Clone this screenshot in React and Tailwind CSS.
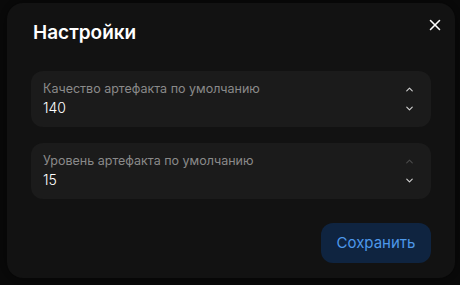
import React, { useState } from 'react';
import { X, ChevronUp, ChevronDown } from 'lucide-react';

const fields = [
  { label: 'Качество артефакта по умолчанию', value: 140, max: 200 },
  { label: 'Уровень артефакта по умолчанию', value: 15, max: 15 },
];

function NumberField({ label, value, max }) {
  const atMax = value >= max;
  return (
    <div className="flex h-14 items-center rounded-xl bg-[#1b1b1b] pl-3 pr-[16px]">
      <div className="flex flex-1 flex-col">
        <span className="text-[12.5px] leading-[18px] text-[#8a8a8a]">{label}</span>
        <span className="text-[14px] font-light leading-5 text-white">{value}</span>
      </div>
      <div className="flex flex-col items-center gap-[8px]">
        <ChevronUp size={11} strokeWidth={2.5} className={atMax ? 'text-[#4a4a4a]' : 'text-[#d0d0d0]'} />
        <ChevronDown size={11} strokeWidth={2.5} className="text-[#d0d0d0]" />
      </div>
    </div>
  );
}

export default function App() {
  const [values] = useState(fields);

  return (
    <div
      className="h-[285px] w-[460px] bg-[#0a0a0a] pl-[7px] pt-[3px]"
      style={{ fontFamily: 'Inter, "Noto Sans", sans-serif' }}
    >
      <div className="relative flex h-[275px] w-[448px] flex-col rounded-2xl bg-[#121212] px-6 pt-4 pb-[15px] shadow-[0_0_20px_rgba(0,0,0,0.6)]">
        <button className="absolute right-[8px] top-[10px] flex h-6 w-6 items-center justify-center text-white">
          <X size={18} strokeWidth={2.1} />
        </button>
        <h2 className="pl-[2px] text-[19px] font-semibold leading-7 text-white">Настройки</h2>
        <div className="mt-6 flex flex-col gap-4">
          {values.map((f) => (
            <NumberField key={f.label} {...f} />
          ))}
        </div>
        <div className="mt-auto flex justify-end">
          <button className="h-10 w-[110px] rounded-xl bg-[#0f2440] text-[15px] text-[#4d98ea]">
            Сохранить
          </button>
        </div>
      </div>
    </div>
  );
}
